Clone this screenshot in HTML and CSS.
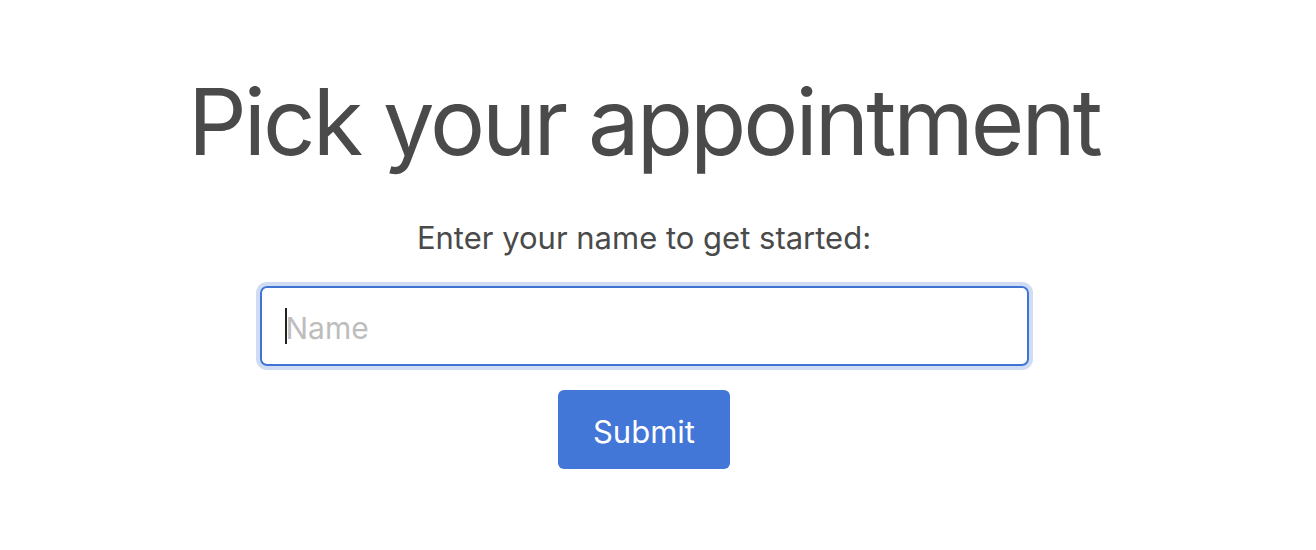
FILE: index.html
```html
<!DOCTYPE html>
<html lang="en">
<head>
<meta charset="utf-8">
<title>Pick your appointment</title>
<link rel="stylesheet" href="styles.css">
</head>
<body>
<main class="page">
  <h1 class="title">Pick your appointment</h1>
  <form class="form">
    <label class="prompt" for="name">Enter your name to get started:</label>
    <div class="field"><span class="caret"></span><input id="name" class="input" type="text" placeholder="Name"></div>
    <button class="submit" type="button">Submit</button>
  </form>
</main>
</body>
</html>
```

FILE: styles.css
```css
html, body {
  margin: 0;
  padding: 0;
  background: #ffffff;
}
body {
  font-family: Inter, "Noto Sans", sans-serif;
  color: #4a4a4a;
}
.page {
  width: 1288px;
  display: flex;
  flex-direction: column;
  align-items: center;
  padding-top: 66px;
}
.title {
  margin: 0;
  font-size: 92px;
  font-weight: 400;
  line-height: 112px;
  letter-spacing: -3px;
}
.form {
  display: flex;
  flex-direction: column;
  align-items: center;
  margin-top: 42px;
}
.prompt {
  font-size: 31px;
  line-height: 36px;
}
.field {
  position: relative;
  margin-top: 30px;
  width: 769px;
  height: 80px;
  box-sizing: border-box;
  border: 2px solid #3f74d5;
  border-radius: 7px;
  box-shadow: 0 0 0 4px #cfdcf4;
  display: flex;
  align-items: center;
}
.input {
  border: none;
  outline: none;
  background: transparent;
  width: 100%;
  height: 100%;
  padding: 4px 0 0 24px;
  box-sizing: border-box;
  font-family: Inter, "Noto Sans", sans-serif;
  font-size: 30px;
  color: #4a4a4a;
}
.input::placeholder {
  color: #bdbdbd;
}
.caret {
  position: absolute;
  left: 23px;
  top: 20px;
  width: 2px;
  height: 36px;
  background: #222;
}
.submit {
  margin-top: 24px;
  width: 172px;
  height: 79px;
  border: none;
  border-radius: 6px;
  background: #4277d7;
  color: #ffffff;
  font-family: Inter, "Noto Sans", sans-serif;
  font-size: 31px;
  padding: 3px 0 0;
}
```
